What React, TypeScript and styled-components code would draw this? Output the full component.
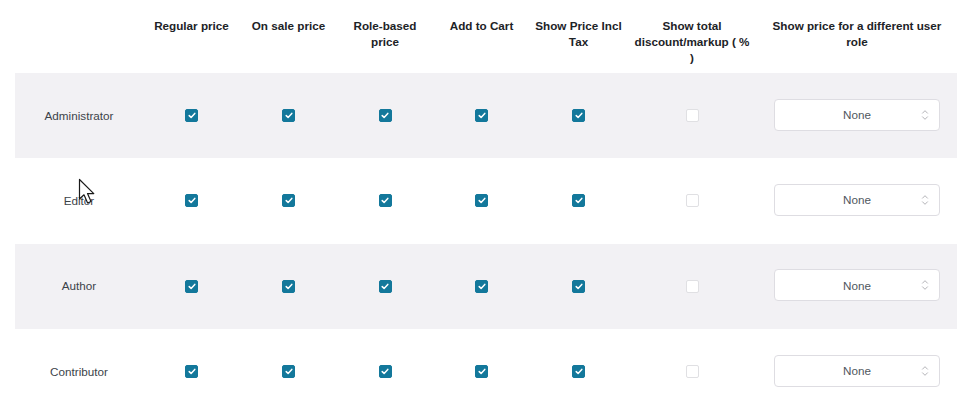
import React from "react";
import styled, { createGlobalStyle } from "styled-components";

const GlobalStyle = createGlobalStyle`
  html, body {
    margin: 0;
    padding: 0;
    background: #ffffff;
  }
  body {
    font-family: "Liberation Sans", Arial, sans-serif;
  }
`;

const COLUMNS = "128px 97px 97px 96px 97px 97px 130px 200px";

const Page = styled.div`
  position: relative;
  width: 972px;
  height: 406px;
  overflow: hidden;
  padding: 0 15px;
  box-sizing: border-box;
`;

const HeaderRow = styled.div`
  display: grid;
  grid-template-columns: ${COLUMNS};
  height: 73px;
  box-sizing: border-box;
  padding-top: 18px;
`;

const HeaderCell = styled.div`
  padding: 0 5px;
  text-align: center;
  font-size: 11.7px;
  line-height: 16px;
  font-weight: 700;
  color: #1d2327;
`;

const Row = styled.div<{ $shaded: boolean }>`
  display: grid;
  grid-template-columns: ${COLUMNS};
  align-items: center;
  height: 85.3px;
  background: ${(p) => (p.$shaded ? "#f2f1f4" : "#ffffff")};
`;

const RoleCell = styled.div`
  text-align: center;
  font-size: 11.7px;
  color: #3c434a;
  margin-top: -1px;
`;

const Cell = styled.div`
  display: flex;
  justify-content: center;
  align-items: center;
`;

const Box = styled.span<{ $checked: boolean }>`
  display: inline-flex;
  align-items: center;
  justify-content: center;
  width: 13px;
  height: 13px;
  box-sizing: border-box;
  border-radius: 2px;
  background: ${(p) => (p.$checked ? "#13789b" : "#ffffff")};
  border: 1px solid ${(p) => (p.$checked ? "#13789b" : "#e0e0e3")};
`;

const Select = styled.div`
  position: relative;
  display: flex;
  align-items: center;
  justify-content: center;
  width: 166px;
  height: 32px;
  margin-top: -2px;
  box-sizing: border-box;
  background: #ffffff;
  border: 1px solid #dedde2;
  border-radius: 4px;
  font-size: 11.7px;
  color: #50575e;
`;

const Arrows = styled.svg`
  position: absolute;
  right: 10px;
  top: 50%;
  transform: translateY(-50%);
`;

const Cursor = styled.svg`
  position: absolute;
  left: 78px;
  top: 178px;
  pointer-events: none;
`;

const headers = [
  "",
  "Regular price",
  "On sale price",
  "Role-based price",
  "Add to Cart",
  "Show Price Incl Tax",
  "Show total discount/markup ( % )",
  "Show price for a different user role",
];

const roles = ["Administrator", "Editor", "Author", "Contributor"];

const Check = ({ checked }: { checked: boolean }) => (
  <Box $checked={checked}>
    {checked && (
      <svg width="8" height="7" viewBox="0 0 8 7">
        <path
          d="M1.2 3.6 L3.1 5.4 L6.8 1.4"
          fill="none"
          stroke="#ffffff"
          strokeWidth="1.5"
          strokeLinecap="round"
          strokeLinejoin="round"
        />
      </svg>
    )}
  </Box>
);

const RoleSelect = () => (
  <Select>
    None
    <Arrows width="8" height="12" viewBox="0 0 8 12">
      <path
        d="M1.5 4.2 L4 1.7 L6.5 4.2 M1.5 7.8 L4 10.3 L6.5 7.8"
        fill="none"
        stroke="#b4b4b8"
        strokeWidth="1"
        strokeLinecap="round"
        strokeLinejoin="round"
      />
    </Arrows>
  </Select>
);

export default function App() {
  return (
    <>
      <GlobalStyle />
      <Page>
        <HeaderRow>
          {headers.map((h, i) => (
            <HeaderCell key={i}>{h}</HeaderCell>
          ))}
        </HeaderRow>
        {roles.map((role, i) => (
          <Row key={role} $shaded={i % 2 === 0}>
            <RoleCell>{role}</RoleCell>
            {[0, 1, 2, 3, 4].map((c) => (
              <Cell key={c}>
                <Check checked />
              </Cell>
            ))}
            <Cell>
              <Check checked={false} />
            </Cell>
            <Cell>
              <RoleSelect />
            </Cell>
          </Row>
        ))}
        <Cursor width="20" height="28" viewBox="0 0 20 28">
          <path
            d="M1.5 1.5 L1.5 21 L6 16.8 L9.6 25 L13 23.5 L9.5 15.6 L15.8 15.6 Z"
            fill="#ffffff"
            stroke="#1a1a1a"
            strokeWidth="1.2"
            strokeLinejoin="round"
          />
        </Cursor>
      </Page>
    </>
  );
}
